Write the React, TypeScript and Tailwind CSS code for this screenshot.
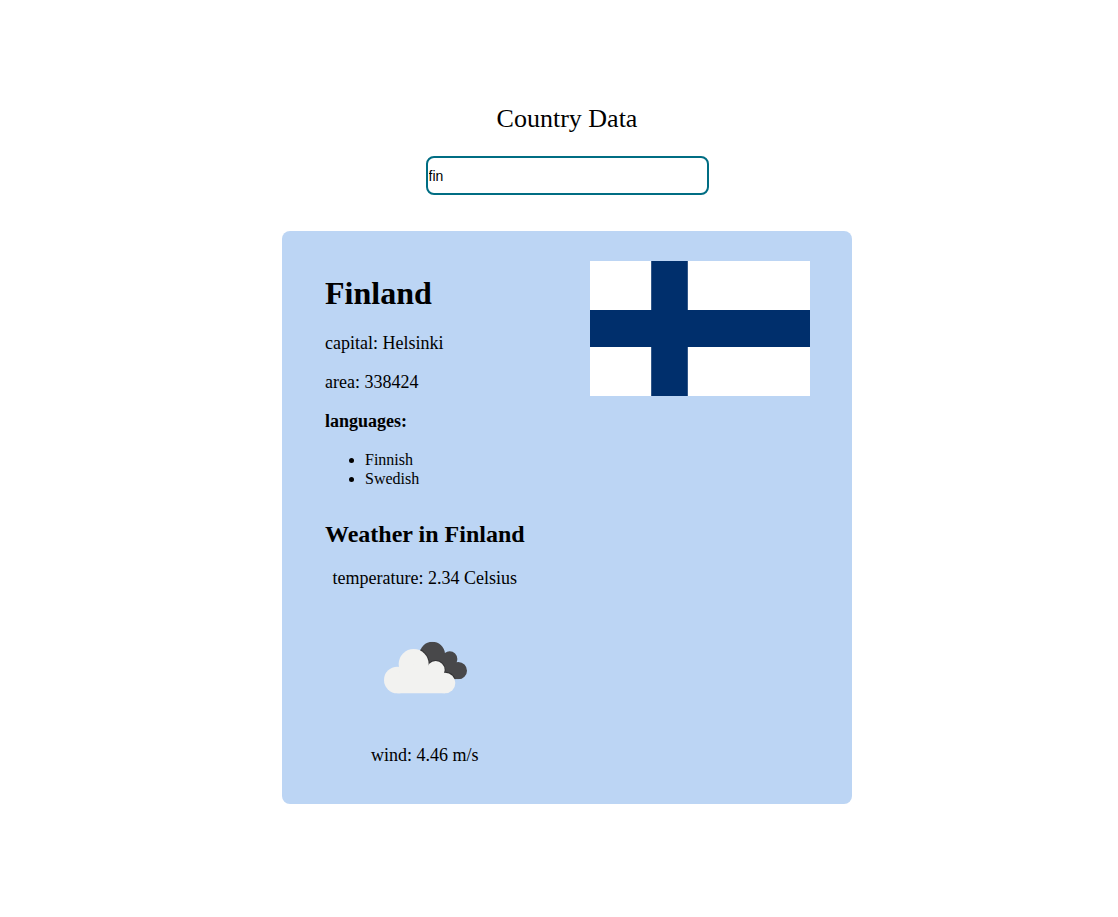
import { useState } from 'react';

const country = {
  name: 'Finland',
  capital: 'Helsinki',
  area: 338424,
  languages: ['Finnish', 'Swedish'],
  weather: { temperature: 2.34, wind: 4.46 },
};

function Flag() {
  return (
    <svg viewBox="0 0 220 135" className="block h-[135px] w-[220px] shrink-0" role="img" aria-label="Flag of Finland">
      <rect width="220" height="135" fill="#fff" />
      <path d="M61.2 0H97.8V49.1H220V85.9H97.8V135H61.2V85.9H0V49.1H61.2Z" fill="#002f6c" />
    </svg>
  );
}

function BrokenClouds() {
  return (
    <svg viewBox="15 -39 300 300" className="my-7 block size-[100px]" role="img" aria-label="Broken clouds">
      <clipPath id="rear-cloud">
        <circle cx="187" cy="73" r="38" />
        <circle cx="239" cy="87" r="23" />
        <circle cx="265" cy="122" r="26" />
        <path d="M187 73L222 72L250 90L265 148H240L180 110Z" />
      </clipPath>
      <g clipPath="url(#rear-cloud)">
        <rect x="140" y="30" width="160" height="130" fill="#48484a" />
        <g fill="#333335">
          <circle cx="131" cy="102" r="48" />
          <circle cx="197" cy="120" r="30" />
          <circle cx="225" cy="159" r="34" />
        </g>
      </g>
      <g fill="#f2f2f0">
        <circle cx="131" cy="102" r="45" />
        <circle cx="82" cy="150" r="40" />
        <circle cx="197" cy="120" r="27" />
        <circle cx="225" cy="159" r="31" />
        <path d="M82 190V130L131 102L197 115L225 159V190Z" />
      </g>
    </svg>
  );
}

export default function App() {
  const [query, setQuery] = useState('fin');

  return (
    <main className="flex min-h-screen flex-col items-center bg-white pt-[103px] pb-28 pl-4 font-['Liberation_Serif',serif] text-black">
      <label htmlFor="country" className="text-[26px] leading-8">
        Country Data
      </label>
      <input
        id="country"
        type="text"
        value={query}
        onChange={(event) => setQuery(event.target.value)}
        className="mt-[21px] h-[39px] w-[283px] rounded-lg border-2 border-[#006d83] bg-white px-px font-['Liberation_Sans',sans-serif] text-sm outline-none"
      />
      <article className="mt-9 flex w-full max-w-[570px] items-start justify-between rounded-lg bg-[#bcd5f4] pt-[30px] pr-[42px] pb-[38px] pl-[43px]">
        <div className="pt-3.5 text-lg leading-[21px]">
          <h1 className="text-[32px] leading-9 font-bold">{country.name}</h1>
          <p className="mt-[22px]">capital: {country.capital}</p>
          <p className="mt-[18px]">area: {country.area}</p>
          <h3 className="mt-[18px] font-bold">languages:</h3>
          <ul className="mt-[18px] list-disc pl-10 text-base leading-[19px]">
            {country.languages.map((language) => (
              <li key={language}>{language}</li>
            ))}
          </ul>
          <section className="mt-8 flex flex-col items-center">
            <h2 className="text-2xl leading-7 font-bold">Weather in {country.name}</h2>
            <p className="mt-5">temperature: {country.weather.temperature} Celsius</p>
            <BrokenClouds />
            <p>wind: {country.weather.wind} m/s</p>
          </section>
        </div>
        <Flag />
      </article>
    </main>
  );
}
